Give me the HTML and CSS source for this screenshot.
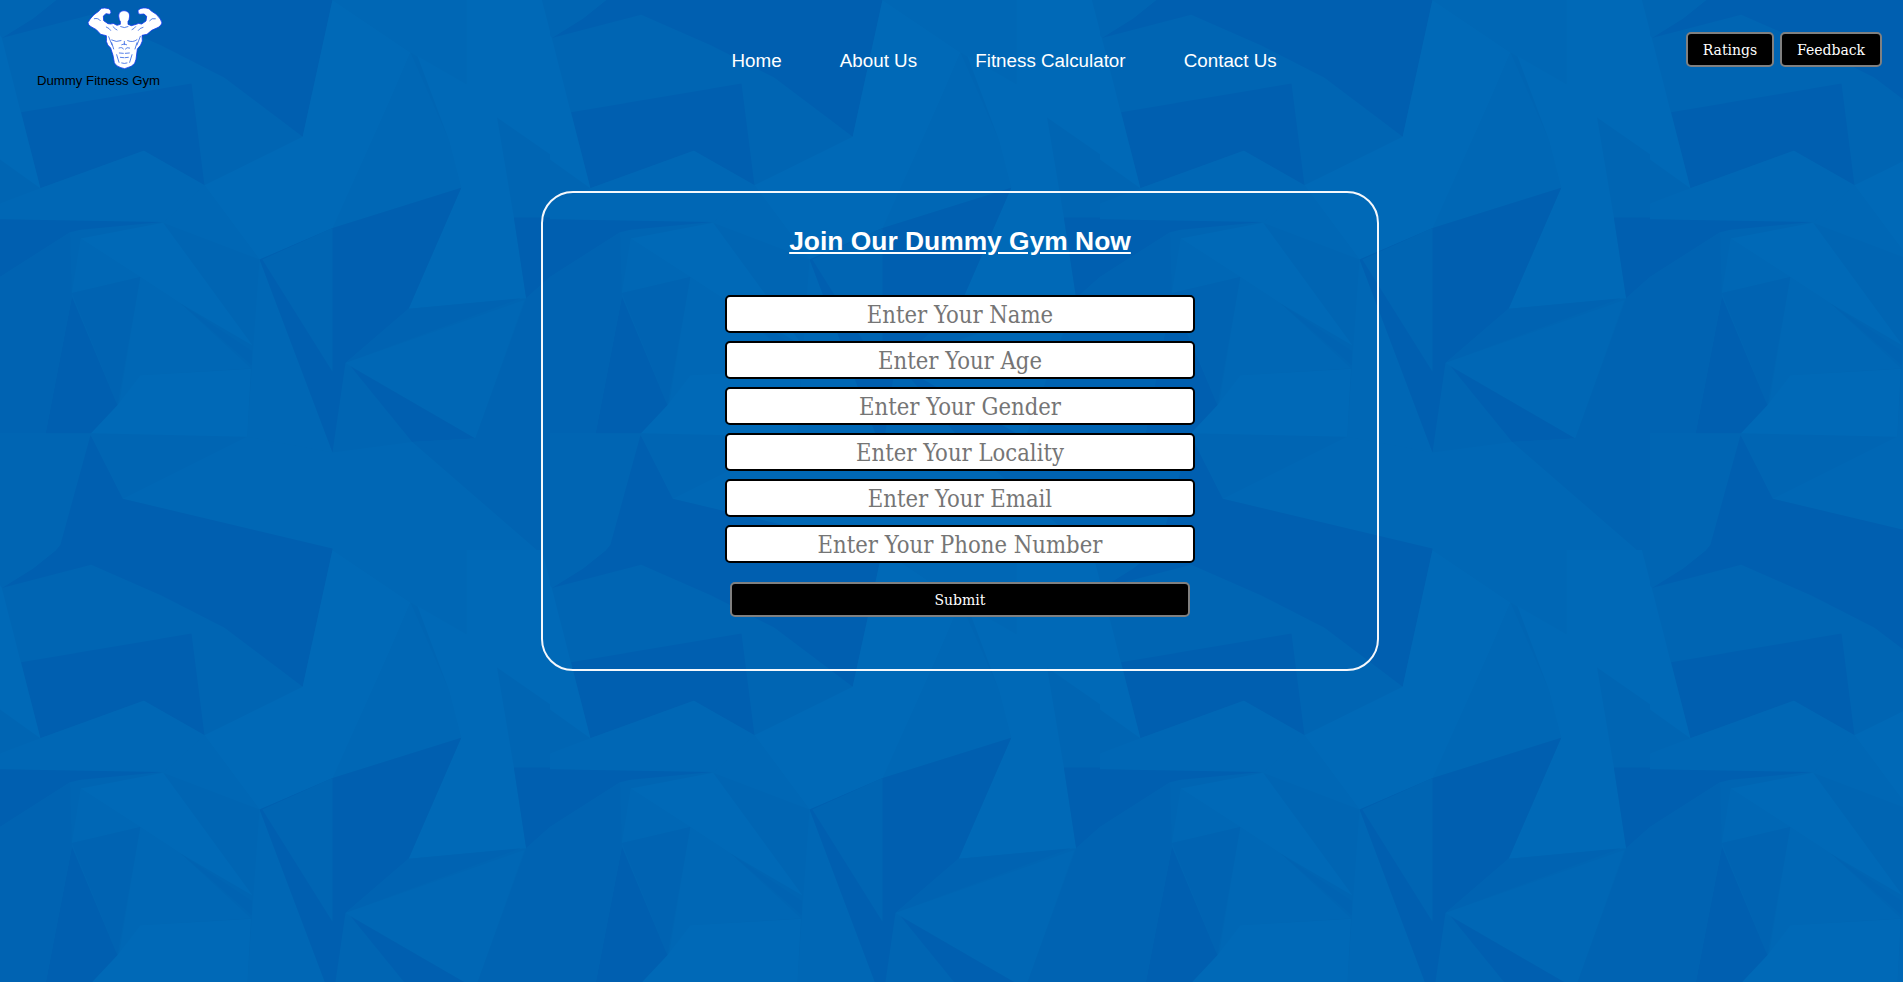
FILE: index.html
```
<!DOCTYPE html>
<html lang="en">
<head>
<meta charset="utf-8">
<title>Dummy Fitness Gym</title>
<link rel="stylesheet" href="styles.css">
</head>
<body>
<svg class="backdrop" aria-hidden="true">
  <defs>
    <pattern id="facets" width="550" height="550" patternUnits="userSpaceOnUse" viewBox="0 0 1568 1568">
      <rect class="mid" width="1568" height="1568"/>
      <path class="dark" d="M160 0H948L863 390 640 222 460 130 260 42 5 108 95 52Z"/>
      <path class="mid" d="M0 0H160L95 52 5 108 0 100Z"/>
      <path class="dark" d="M60 320 546 238 583 528 410 430 115 537Z"/>
      <path class="light" d="M0 100 5 108 115 537 0 455Z"/>
      <path class="soft" d="M115 537 410 430 583 528 465 635 0 625V580Z"/>
      <path class="light" d="M583 528 863 390 948 0 1170 150 1110 290 950 650 740 740Z"/>
      <path class="soft" d="M465 635 583 528 740 740Z"/>
      <path class="soft" d="M948 0H1330V240L1170 150Z"/>
      <path class="soft" d="M1170 150 1280 400 1315 535 948 650 1110 290Z"/>
      <path class="light" d="M1330 0H1545L1568 90V440L1417 335 1465 620 1500 850 1165 880 1315 535 1280 400 1190 160 1330 240Z"/>
      <path class="dark" d="M0 625 465 633 230 655 200 662 0 790Z"/>
      <path class="dark" d="M1465 620H1568V790L1500 850Z"/>
      <path class="light" d="M230 680 465 635 720 985 515 865 400 790Z"/>
      <path class="soft" d="M230 680 400 790 205 835Z"/>
      <path class="soft" d="M400 790 515 865 715 1050 400 1070 340 1150Z"/>
      <path class="shade" d="M515 865 718 1000V1042Z"/>
      <path class="shade" d="M205 835 400 790 335 1155Z"/>
      <path class="dark" d="M205 845 335 1155 260 1235H130Z"/>
      <path class="light" d="M400 1070 715 1052 705 1245 260 1235 335 1155Z"/>
      <path class="soft" d="M740 740 948 1290 705 1245 722 990Z"/>
      <path class="dark" d="M740 740 948 650 1315 535 1165 880 985 1035 948 1290Z"/>
      <path class="mid" d="M748 740 948 650V1060Z"/>
      <path class="shade" d="M1165 880 1485 850 985 1035Z"/>
      <path class="soft" d="M985 1035 1495 855 1355 1250Z"/>
      <path class="dark" d="M1000 1045 1355 1250 1175 1260Z"/>
      <path class="shade" d="M1500 850 1568 790V1568H1530L1175 1260 1355 1250Z"/>
      <path class="shade" d="M0 790 200 662 205 845 130 1235H0Z"/>
      <path class="soft" d="M705 1245 948 1290 1175 1260 1530 1568H948L350 1422Z"/>
      <path class="dark" d="M258 1240 350 1422 948 1564V1568H160L172 1554Z"/>
    </pattern>
  </defs>
  <rect width="100%" height="100%" fill="url(#facets)"/>
</svg>

<header class="header">
  <div class="brand">
    <svg class="brand-mark" viewBox="0 0 270 225" role="img" aria-label="Bodybuilder">
      <path class="body" d="M132 32C121 32 116 39 116 48L118 60 121 64V73L111 76Q99 67 92 72L84 71 71 62 70 48 78 41 89 43Q95 38 92 32 88 24 74 24L65 25Q60 28 56 34L42 44Q28 58 24 68 24 76 33 80L49 89 62 103 79 107Q80 115 79 124 81 136 92 144L99 166 103 188Q109 201 134 206 158 200 164 190L168 178 172 147Q184 136 187 123L186 106 201 103 215 91 235 82Q244 76 246 69 244 58 229 43L214 33Q208 24 198 24 180 22 174 32 173 42 180 43L192 42 200 49 198 63 185 72Q174 68 169 73L154 77 144 73V64L147 60 149 48C149 39 143 32 132 32Z"/>
      <path class="cut" d="M79 81Q89 85 92 91M99 80Q106 88 111 90M189 82Q179 84 175 91M167 80Q162 87 156 89M122 80Q133 86 144 80M95 120Q109 128 123 122M143 122Q159 129 171 119M133 124V134M125 134Q133 129 140 134M95 128 101 147M171 128 165 147M86 110 96 135M181 109 171 135M117 144Q128 140 130 147M136 147Q140 140 149 144M118 159 130 160M136 160 148 159M121 172 131 173M135 173 145 172M110 164 117 187M156 164 149 187M125 189Q133 192 141 189M43 56Q55 53 61 62M226 56Q215 53 209 62"/>
    </svg>
    <span class="brand-name">Dummy Fitness Gym</span>
  </div>
  <nav class="nav">
    <a>Home</a>
    <a>About Us</a>
    <a>Fitness Calculator</a>
    <a>Contact Us</a>
  </nav>
  <div class="actions">
    <button class="btn btn-ratings">Ratings</button>
    <button class="btn btn-feedback">Feedback</button>
  </div>
</header>

<main class="card">
  <h1 class="title">Join Our Dummy Gym Now</h1>
  <form class="form">
    <input class="field" type="text" placeholder="Enter Your Name">
    <input class="field" type="text" placeholder="Enter Your Age">
    <input class="field" type="text" placeholder="Enter Your Gender">
    <input class="field" type="text" placeholder="Enter Your Locality">
    <input class="field" type="text" placeholder="Enter Your Email">
    <input class="field" type="text" placeholder="Enter Your Phone Number">
    <button class="btn btn-submit" type="button">Submit</button>
  </form>
</main>
</body>
</html>
```

FILE: styles.css
```
* { box-sizing: border-box; }

html, body { height: 100%; }

body {
  margin: 0;
  overflow: hidden;
  background: #0065b4;
  font-family: "Liberation Sans", Arial, sans-serif;
}

.backdrop {
  position: absolute;
  inset: 0;
  z-index: -1;
  width: 100%;
  height: 100%;
}

.mid { fill: #0065b3; }
.dark { fill: #005fb0; }
.light { fill: #0069b7; }
.soft { fill: #0067b5; }
.shade { fill: #0063b2; }

.header {
  display: flex;
  align-items: flex-start;
  justify-content: space-between;
  height: 191px;
}

.brand {
  display: flex;
  flex-direction: column;
  width: 731px;
  padding-left: 37px;
}

.brand-mark {
  width: 90px;
  height: 75px;
  margin-left: 43px;
}

.body {
  fill: #fff;
  stroke: #1238f0;
  stroke-width: 2.4;
  stroke-linejoin: round;
}

.cut {
  fill: none;
  stroke: #1c54e0;
  stroke-width: 2.2;
  stroke-linecap: round;
}

.brand-name {
  margin-top: -2px;
  font-size: 13.2px;
  line-height: 15px;
  color: #000;
}

.nav {
  display: flex;
  flex: 1;
  gap: 58.2px;
  padding: 50px 0 0 .5px;
  font-size: 18.8px;
  line-height: 22px;
  color: #fff;
}

.actions {
  display: flex;
  gap: 6px;
  padding: 32px 21px 0 0;
}

.btn {
  height: 35px;
  padding: 1px 0 0;
  border: 2px solid #808080;
  border-radius: 5px;
  background: #000;
  color: #fff;
  font-family: "DejaVu Serif", serif;
  font-size: 14px;
}

.btn-ratings { width: 88px; }
.btn-feedback { width: 102px; }

.card {
  width: 838px;
  height: 480px;
  margin-left: 541px;
  padding-top: 32px;
  border: 2px solid #f5f8fc;
  border-radius: 32px;
}

.title {
  margin: 0;
  font-size: 26.4px;
  line-height: 32px;
  text-align: center;
  text-decoration: underline;
  color: #fff;
}

.form {
  display: flex;
  flex-direction: column;
  align-items: center;
  gap: 7.6px;
  margin-top: 38px;
}

.field {
  width: 470px;
  height: 38.4px;
  padding: 2px 0 0;
  border: 2px solid #000;
  border-radius: 5px;
  background: #fff;
  font-family: "DejaVu Serif Condensed", "DejaVu Serif", serif;
  font-size: 23.6px;
  text-align: center;
}

.field::placeholder { color: #757575; }

.btn-submit {
  width: 460px;
  margin-top: 11px;
}
```
